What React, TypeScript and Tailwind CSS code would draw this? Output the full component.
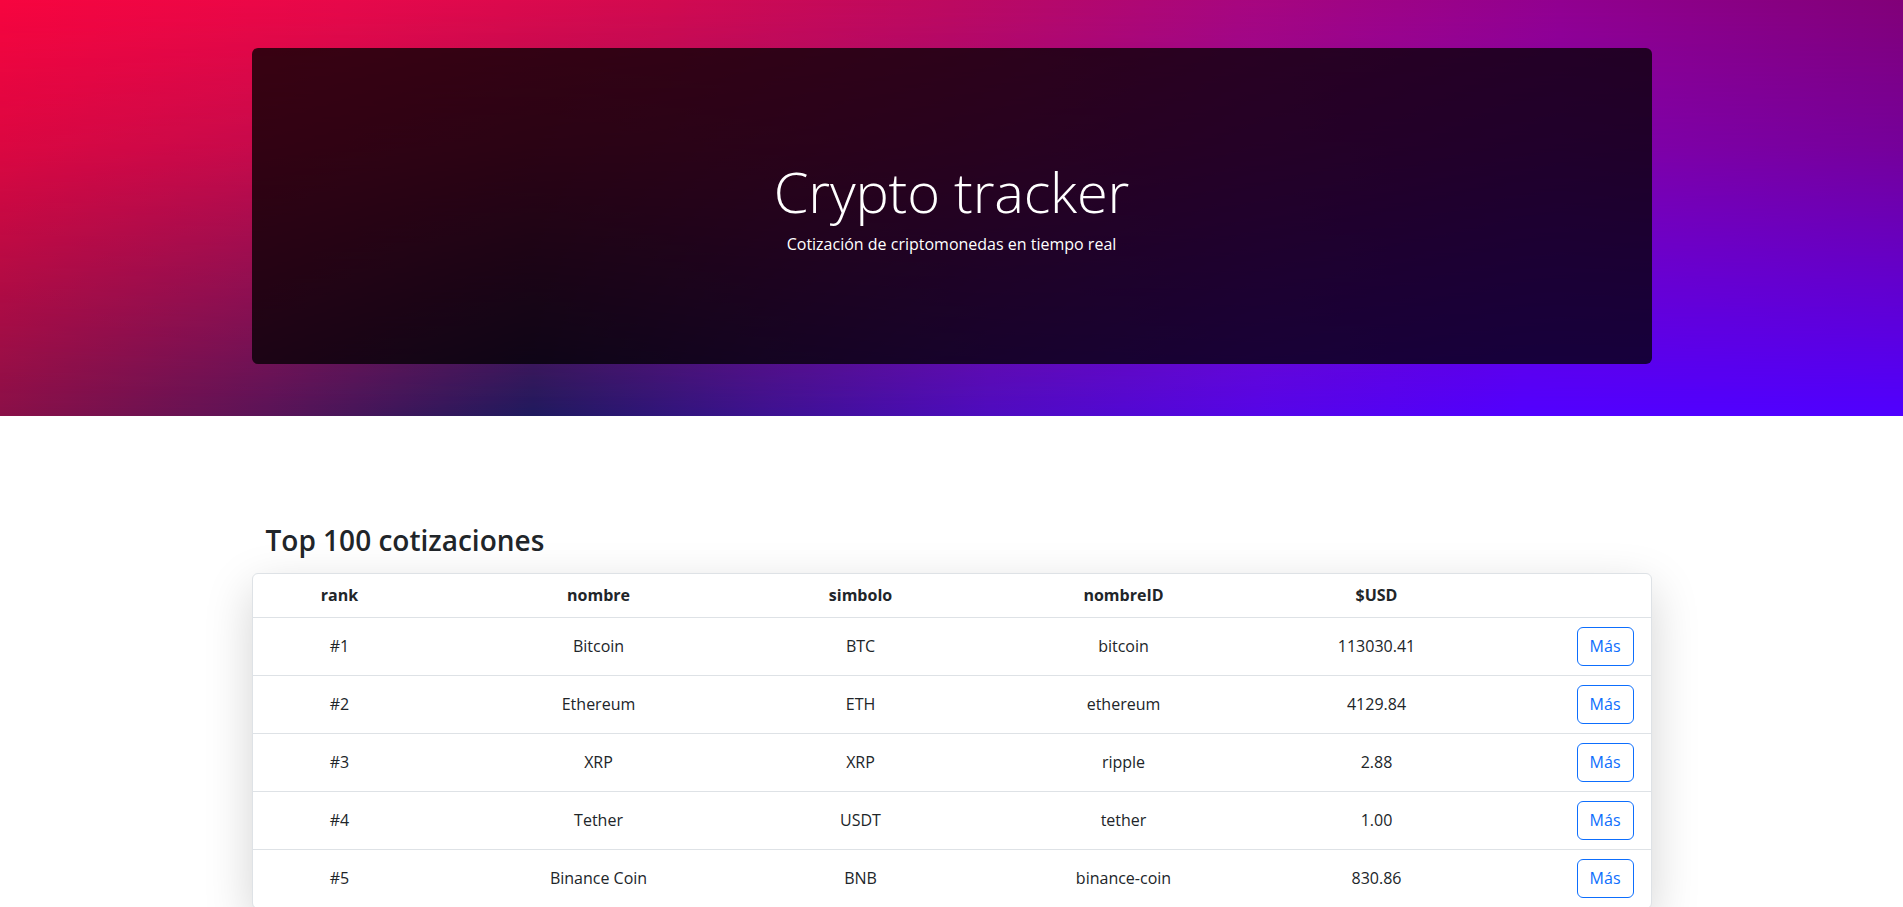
import React from "react";

const rows = [
  { rank: 1, name: "Bitcoin", symbol: "BTC", id: "bitcoin", usd: "113030.41" },
  { rank: 2, name: "Ethereum", symbol: "ETH", id: "ethereum", usd: "4129.84" },
  { rank: 3, name: "XRP", symbol: "XRP", id: "ripple", usd: "2.88" },
  { rank: 4, name: "Tether", symbol: "USDT", id: "tether", usd: "1.00" },
  { rank: 5, name: "Binance Coin", symbol: "BNB", id: "binance-coin", usd: "830.86" },
];

const cols = "grid grid-cols-[174px_344px_180px_346px_160px_1fr] items-center";

export default function App() {
  return (
    <div className="min-h-screen bg-white text-[#212529] font-['Open_Sans','Noto_Sans',sans-serif]">
      {/* Hero */}
      <header className="relative h-[416px] bg-[linear-gradient(to_right,#8a1048_0%,#5a1458_14%,#1f1a5e_28%,#3c1290_40%,#4e0cc0_52%,#5606e8_66%,#5200ff_80%,#5000ff_100%)]">
        <div className="absolute inset-0 bg-[linear-gradient(to_right,#f7043f_0%,#e8084a_18%,#d20a50_35%,#bd0960_50%,#a8067e_65%,#920090_82%,#820078_100%)] [mask-image:linear-gradient(to_bottom,black_0%,rgba(0,0,0,0.75)_35%,rgba(0,0,0,0.35)_70%,transparent_100%)]" />
        <div className="relative mx-auto w-[1400px] pt-[48px]">
          <div className="flex h-[316px] flex-col items-center justify-center rounded-md bg-black/75 text-white">
            <h1 className="mt-[2px] text-[56px] font-light leading-[1.2] tracking-[-0.2px]">Crypto tracker</h1>
            <p className="mt-[6px] text-[16px] leading-[24px]">Cotización de criptomonedas en tiempo real</p>
          </div>
        </div>
      </header>

      {/* Table section */}
      <main className="mx-auto w-[1400px] pt-[108px]">
        <h3 className="pl-[14px] pb-[15px] text-[28px] font-semibold leading-[1.2]">Top 100 cotizaciones</h3>
        <div className="overflow-hidden rounded-md border border-[#dee2e6] bg-white shadow-[0_1rem_3rem_rgba(0,0,0,0.175)]">
          <div className={`${cols} h-[44px] border-b border-[#dee2e6] text-[16px] font-bold`}>
            <div className="text-center">rank</div>
            <div className="text-center">nombre</div>
            <div className="text-center">simbolo</div>
            <div className="text-center">nombreID</div>
            <div className="text-center">$USD</div>
            <div />
          </div>
          {rows.map((r) => (
            <div key={r.rank} className={`${cols} h-[58px] border-b border-[#dee2e6] text-[16px]`}>
              <div className="text-center">#{r.rank}</div>
              <div className="text-center">{r.name}</div>
              <div className="text-center">{r.symbol}</div>
              <div className="text-center">{r.id}</div>
              <div className="text-center">{r.usd}</div>
              <div className="flex justify-end pr-[17px]">
                <button className="h-[39px] rounded-md border border-[#0d6efd] px-[12px] text-[16px] text-[#0d6efd]">
                  Más
                </button>
              </div>
            </div>
          ))}
        </div>
      </main>
    </div>
  );
}
